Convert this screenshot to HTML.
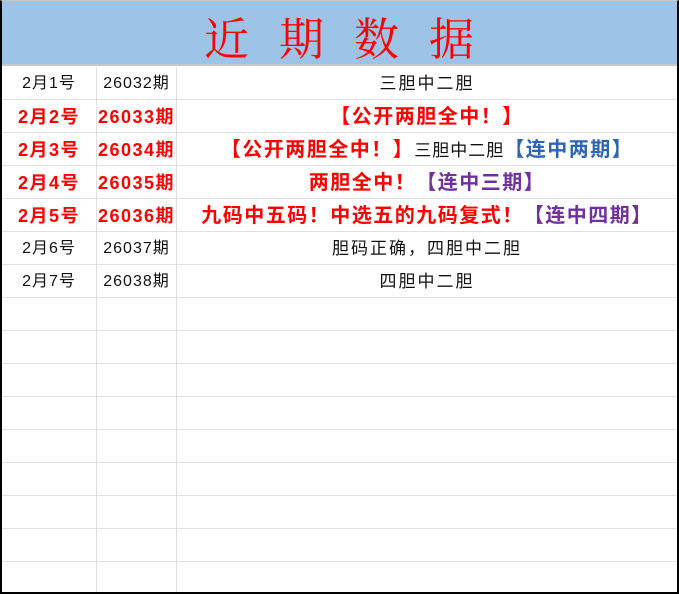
<!DOCTYPE html>
<html><head><meta charset="utf-8"><style>
*{margin:0;padding:0;box-sizing:border-box}
body{width:679px;height:594px;background:#fff;position:relative;overflow:hidden;font-family:"Liberation Sans","Noto Sans CJK SC",sans-serif}
.frame{position:absolute;left:0;top:0;width:679px;height:594px;border-left:2px solid #000;border-right:2px solid #000;border-bottom:2px solid #000;border-top:1px solid #c8c8c8}
.hdr{position:absolute;left:2px;top:1px;width:675px;height:65px;background:#9dc3e6;border-bottom:2px solid #c8c8c8;text-align:center}
.hdr span{display:inline-block;margin-left:29px;font-family:"Noto Serif CJK SC",serif;font-size:45px;color:#ff0000;letter-spacing:30px;line-height:70px}
.row{position:absolute;left:2px;width:675px;height:33px;border-bottom:1px solid #e0e0e0;display:flex}
.c{height:32px;line-height:34px;text-align:center;white-space:nowrap;font-size:16px;color:#111;letter-spacing:1px}
.c1{width:95px;border-right:1px solid #e0e0e0}
.c2{width:80px;border-right:1px solid #e0e0e0}
.c3{flex:1;letter-spacing:2px;font-size:17px}
.r{color:#ff0000;font-weight:bold;font-size:18px}
.c1.r,.c2.r{letter-spacing:1.5px}
.c3 .r,.c3.r,.b,.p{letter-spacing:1.5px;font-size:20px}
.b{color:#2e64b4;font-weight:bold}
.p{color:#7030a0;font-weight:bold}
.k{color:#111;font-weight:normal;font-size:17px;letter-spacing:1px}
</style></head><body>
<div class="hdr"><span>近期数据</span></div>
<div class="row" style="top:67px"><div class="c c1">2月1号</div><div class="c c2">26032期</div><div class="c c3">三胆中二胆</div></div>
<div class="row" style="top:100px"><div class="c c1 r">2月2号</div><div class="c c2 r">26033期</div><div class="c c3 r">【公开两胆全中！】</div></div>
<div class="row" style="top:133px"><div class="c c1 r">2月3号</div><div class="c c2 r">26034期</div><div class="c c3"><span class="r">【公开两胆全中！】</span><span class="k">三胆中二胆</span><span class="b">【连中两期】</span></div></div>
<div class="row" style="top:166px"><div class="c c1 r">2月4号</div><div class="c c2 r">26035期</div><div class="c c3"><span class="r">两胆全中！</span><span class="p">【连中三期】</span></div></div>
<div class="row" style="top:199px"><div class="c c1 r">2月5号</div><div class="c c2 r">26036期</div><div class="c c3"><span class="r">九码中五码！中选五的九码复式！</span><span class="p">【连中四期】</span></div></div>
<div class="row" style="top:232px"><div class="c c1">2月6号</div><div class="c c2">26037期</div><div class="c c3">胆码正确，四胆中二胆</div></div>
<div class="row" style="top:265px"><div class="c c1">2月7号</div><div class="c c2">26038期</div><div class="c c3">四胆中二胆</div></div>
<div class="row" style="top:298px"><div class="c c1"></div><div class="c c2"></div><div class="c c3"></div></div>
<div class="row" style="top:331px"><div class="c c1"></div><div class="c c2"></div><div class="c c3"></div></div>
<div class="row" style="top:364px"><div class="c c1"></div><div class="c c2"></div><div class="c c3"></div></div>
<div class="row" style="top:397px"><div class="c c1"></div><div class="c c2"></div><div class="c c3"></div></div>
<div class="row" style="top:430px"><div class="c c1"></div><div class="c c2"></div><div class="c c3"></div></div>
<div class="row" style="top:463px"><div class="c c1"></div><div class="c c2"></div><div class="c c3"></div></div>
<div class="row" style="top:496px"><div class="c c1"></div><div class="c c2"></div><div class="c c3"></div></div>
<div class="row" style="top:529px"><div class="c c1"></div><div class="c c2"></div><div class="c c3"></div></div>
<div class="row" style="top:562px;border-bottom:none"><div class="c c1"></div><div class="c c2"></div><div class="c c3"></div></div>
<div class="frame"></div>
</body></html>
